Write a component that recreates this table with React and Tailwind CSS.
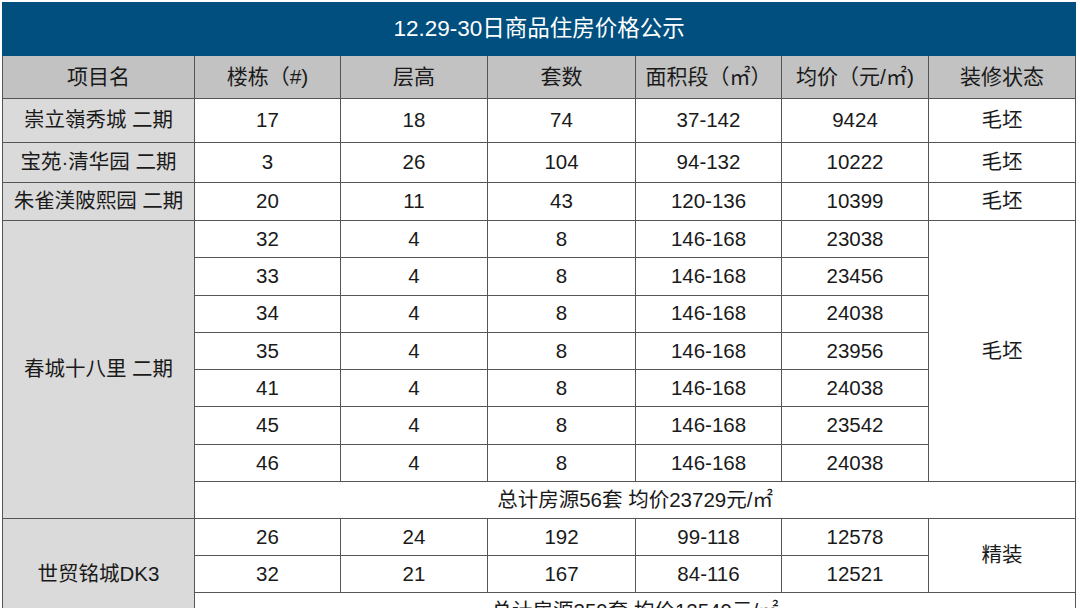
const FONT = { fontFamily: '"Liberation Sans", "Noto Sans CJK SC", sans-serif' };

const cell = 'border border-[#555] text-center align-middle p-0';
const nameCell = 'border border-[#555] bg-[#dadada] text-center align-middle p-0';

const singles = [
  { name: '崇立嶺秀城 二期', bld: '17', fl: '18', n: '74', area: '37-142', price: '9424', deco: '毛坯', h: 'h-[44px]' },
  { name: '宝苑·清华园 二期', bld: '3', fl: '26', n: '104', area: '94-132', price: '10222', deco: '毛坯', h: 'h-[40px]' },
  { name: '朱雀渼陂熙园 二期', bld: '20', fl: '11', n: '43', area: '120-136', price: '10399', deco: '毛坯', h: 'h-[38px]' },
];

const chuncheng = [
  ['32', '23038'],
  ['33', '23456'],
  ['34', '24038'],
  ['35', '23956'],
  ['41', '24038'],
  ['45', '23542'],
  ['46', '24038'],
];

const shimao = [
  { bld: '26', fl: '24', n: '192', area: '99-118', price: '12578' },
  { bld: '32', fl: '21', n: '167', area: '84-116', price: '12521' },
];

export default function App() {
  return (
    <div className="w-[1080px] bg-white pt-[2px] pl-[2px] text-[20.5px] text-[#1a1a1a]" style={FONT}>
      <table className="table-fixed border-collapse w-[1073px]">
        <colgroup>
          <col className="w-[192px]" />
          <col className="w-[146px]" />
          <col className="w-[147px]" />
          <col className="w-[148px]" />
          <col className="w-[146px]" />
          <col className="w-[147px]" />
          <col className="w-[147px]" />
        </colgroup>
        <tbody>
          <tr className="h-[53px]">
            <td colSpan={7} className="bg-[#004f7f] text-white text-[22.5px] text-center align-middle border border-[#004f7f]">
              12.29-30日商品住房价格公示
            </td>
          </tr>
          <tr className="h-[43px] bg-[#c2c2c2] text-[21px]">
            <td className={cell}>项目名</td>
            <td className={cell}>楼栋（#)</td>
            <td className={cell}>层高</td>
            <td className={cell}>套数</td>
            <td className={cell}>面积段（㎡）</td>
            <td className={cell}>均价（元/㎡)</td>
            <td className={cell}>装修状态</td>
          </tr>
          {singles.map(r => (
            <tr key={r.name} className={r.h}>
              <td className={nameCell}>{r.name}</td>
              <td className={cell}>{r.bld}</td>
              <td className={cell}>{r.fl}</td>
              <td className={cell}>{r.n}</td>
              <td className={cell}>{r.area}</td>
              <td className={cell}>{r.price}</td>
              <td className={cell}>{r.deco}</td>
            </tr>
          ))}
          {chuncheng.map(([bld, price], i) => (
            <tr key={bld} className="h-[37.3px]">
              {i === 0 && <td rowSpan={8} className={nameCell}>春城十八里 二期</td>}
              <td className={cell}>{bld}</td>
              <td className={cell}>4</td>
              <td className={cell}>8</td>
              <td className={cell}>146-168</td>
              <td className={cell}>{price}</td>
              {i === 0 && <td rowSpan={7} className={cell}>毛坯</td>}
            </tr>
          ))}
          <tr className="h-[37px]">
            <td colSpan={6} className={cell}>总计房源56套 均价23729元/㎡</td>
          </tr>
          {shimao.map((r, i) => (
            <tr key={r.bld} className="h-[37px]">
              {i === 0 && <td rowSpan={3} className={nameCell}>世贸铭城DK3</td>}
              <td className={cell}>{r.bld}</td>
              <td className={cell}>{r.fl}</td>
              <td className={cell}>{r.n}</td>
              <td className={cell}>{r.area}</td>
              <td className={cell}>{r.price}</td>
              {i === 0 && <td rowSpan={2} className={cell}>精装</td>}
            </tr>
          ))}
          <tr className="h-[37px]">
            <td colSpan={6} className={cell}>总计房源359套 均价12549元/㎡</td>
          </tr>
        </tbody>
      </table>
    </div>
  );
}
